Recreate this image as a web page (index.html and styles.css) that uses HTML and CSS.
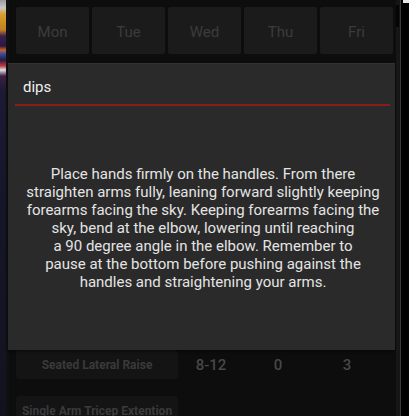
FILE: index.html
```html
<!DOCTYPE html>
<html>
<head>
<meta charset="utf-8">
<link rel="stylesheet" href="styles.css">
</head>
<body>
<div class="screen">
  <div class="wall"></div>
  <div class="app">
    <div class="days">
      <div class="day">Mon</div>
      <div class="day">Tue</div>
      <div class="day">Wed</div>
      <div class="day">Thu</div>
      <div class="day">Fri</div>
    </div>
    <div class="list">
      <div class="row">
        <div class="ex">Seated Lateral Raise</div>
        <div class="num reps">8-12</div>
        <div class="num wt">0</div>
        <div class="num sets">3</div>
      </div>
      <div class="row">
        <div class="ex">Single Arm Tricep Extention</div>
      </div>
    </div>
    <div class="dialog">
      <div class="title">dips</div>
      <div class="rule"></div>
      <p class="desc">Place hands firmly on the handles. From there<br>straighten arms fully, leaning forward slightly keeping<br>forearms facing the sky. Keeping forearms facing the<br>sky, bend at the elbow, lowering until reaching<br>a 90 degree angle in the elbow. Remember to<br>pause at the bottom before pushing against the<br>handles and straightening your arms.</p>
    </div>
  </div>
  <div class="scroll"><div class="thumb"></div></div>
  <div class="edge"><div class="corner"></div></div>
</div>
</body>
</html>
```
FILE: styles.css
```css
html, body {
  margin: 0;
  padding: 0;
  background: #000;
  width: 409px;
  height: 416px;
  overflow: hidden;
  font-family: Roboto, "Liberation Sans", sans-serif;
}
.screen {
  display: flex;
  height: 416px;
}
.wall {
  width: 6px;
  flex: none;
  background: linear-gradient(to bottom,
    #9a9aa0 0px, #c8c8c8 8px, #d8a030 14px, #c08020 30px,
    #3a2050 36px, #2a1840 46px, #d06020 50px, #3050a0 54px,
    #2a1a40 60px, #c04040 66px, #e0e0f0 70px, #402040 76px,
    #1c1a34 90px, #16162a 200px, #12121f 416px);
}
.app {
  width: 390px;
  flex: none;
  background: #0d0d0d;
  position: relative;
  box-shadow: inset 3px 0 0 #101010;
}
.days {
  display: flex;
  gap: 3px;
  padding: 7px 0 0 10px;
}
.day {
  width: 73px;
  height: 47px;
  background: #1b1b1b;
  border-radius: 2px;
  color: #3b3b3b;
  font-size: 15px;
  display: flex;
  align-items: center;
  justify-content: center;
  padding-top: 2px;
  box-sizing: border-box;
}
.list {
  margin-top: 296px;
  padding-left: 10px;
  display: flex;
  flex-direction: column;
  gap: 17px;
}
.row {
  display: flex;
  align-items: center;
  height: 29px;
}
.ex {
  width: 162px;
  height: 29px;
  background: #141414;
  border-radius: 3px;
  color: #3a3a3a;
  font-weight: bold;
  font-size: 12px;
  display: flex;
  align-items: center;
  justify-content: center;
  white-space: nowrap;
  overflow: hidden;
}
.num {
  color: #474747;
  font-size: 15px;
  font-weight: 500;
  text-align: center;
}
.reps { width: 34px; margin-left: 16px; }
.wt { width: 10px; margin-left: 45px; }
.sets { width: 10px; margin-left: 59px; }
.dialog {
  position: absolute;
  left: 2px;
  top: 63px;
  width: 387px;
  height: 287px;
  background: #2a2a2a;
  border-top: 1px solid #323232;
  box-sizing: border-box;
  box-shadow: 0 1px 3px rgba(0,0,0,0.6);
}
.title {
  color: #f0f0f0;
  font-size: 15px;
  padding: 14px 0 0 15px;
  height: 25px;
  line-height: 18px;
}
.rule {
  margin: 1px 5px 0 7px;
  height: 2px;
  background: #8a1c1c;
}
.desc {
  margin: 59px 0 0 0;
  padding-left: 3px;
  color: #e4e4e4;
  font-size: 15px;
  line-height: 18px;
  text-align: center;
}
.scroll {
  width: 4px;
  flex: none;
  background: #161616;
  border-right: 1px solid #3a3a3a;
  position: relative;
}
.thumb {
  margin-top: 5px;
  height: 22px;
  width: 3px;
  background: #050505;
}
.edge {
  flex: 1;
  background: #000;
}
.corner {
  height: 3px;
  margin-left: 2px;
  background: #e8e8e8;
}
```
